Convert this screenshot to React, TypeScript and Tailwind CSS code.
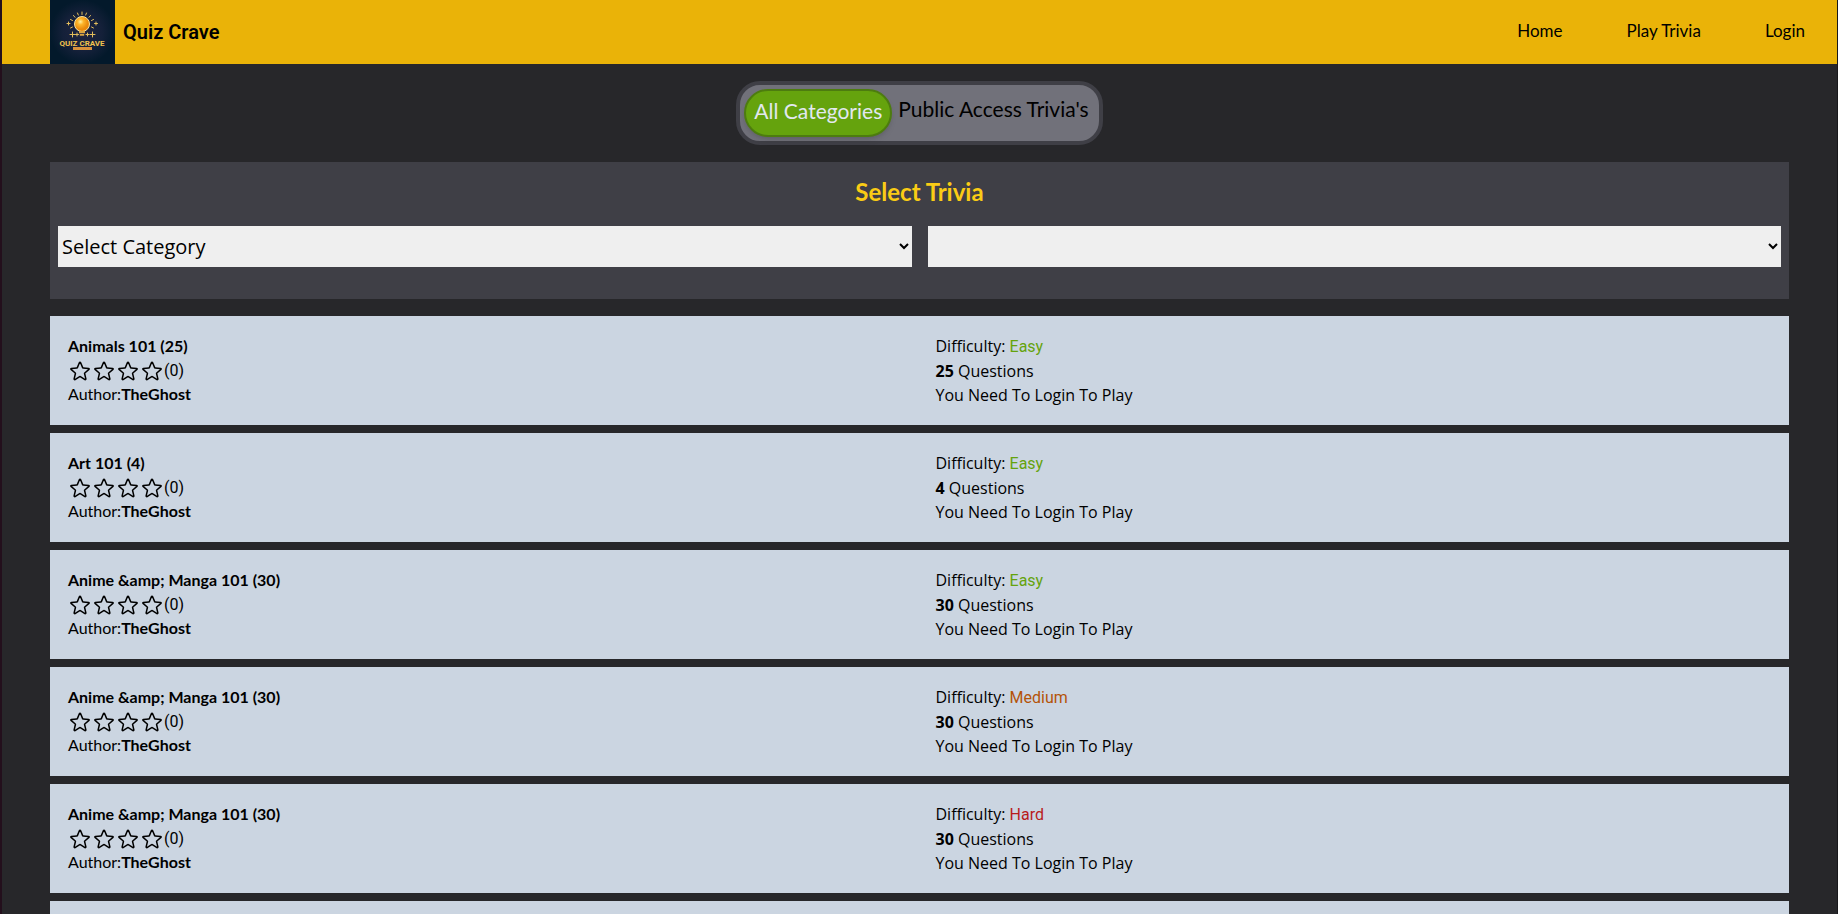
import { HiOutlineStar } from 'react-icons/hi2';

interface Trivia {
  title: string;
  count: number;
  difficulty: 'Easy' | 'Medium' | 'Hard';
  author: string;
}

const trivias: Trivia[] = [
  { title: 'Animals 101', count: 25, difficulty: 'Easy', author: 'TheGhost' },
  { title: 'Art 101', count: 4, difficulty: 'Easy', author: 'TheGhost' },
  { title: 'Anime &amp; Manga 101', count: 30, difficulty: 'Easy', author: 'TheGhost' },
  { title: 'Anime &amp; Manga 101', count: 30, difficulty: 'Medium', author: 'TheGhost' },
  { title: 'Anime &amp; Manga 101', count: 30, difficulty: 'Hard', author: 'TheGhost' },
];

const difficultyColor: Record<Trivia['difficulty'], string> = {
  Easy: 'text-[#65a30d]',
  Medium: 'text-[#b45309]',
  Hard: 'text-[#b91c1c]',
};

const navLinks = ['Home', 'Play Trivia', 'Login'];

function Logo() {
  return (
    <svg className="h-16 w-[65px]" viewBox="0 0 65 64" role="img" aria-label="Quiz Crave logo">
      <defs>
        <radialGradient id="logo-bg">
          <stop offset="0" stopColor="#1f2440" />
          <stop offset="0.6" stopColor="#142039" />
          <stop offset="1" stopColor="#03192b" />
        </radialGradient>
        <radialGradient id="logo-bulb" cx="0.4" cy="0.35">
          <stop offset="0" stopColor="#fff0a0" />
          <stop offset="0.4" stopColor="#fdb52a" />
          <stop offset="1" stopColor="#e98a0c" />
        </radialGradient>
      </defs>
      <rect width="65" height="64" fill="url(#logo-bg)" />
      <g stroke="#e3bd5c" strokeWidth="1" strokeLinecap="round">
        <path d="M32 12v2.500M27.500 13l.8 2M36.500 13l-.8 2M23.500 15.500l1.500 1.800M40.500 15.500l-1.500 1.800M20.500 19.500l2 1M43.500 19.500l-2 1M20.500 28l2-1M43.500 28l-2-1" />
        <path d="M18.500 22v3M17 23.500h3M46 22v3M44.500 23.500h3M22.500 32v5M20 34.500h5M42.500 32v5M40 34.500h5M27 33v3M25.500 34.500h3M37.500 33v3M36 34.500h3" />
      </g>
      <circle cx="32" cy="24" r="7.500" fill="url(#logo-bulb)" stroke="#f6e3a0" strokeWidth="1" />
      <path d="M29 31h6v2.200h-6zM29.800 34h4.400v1.800h-4.400z" fill="#d9a441" />
      <text x="32" y="46" textAnchor="middle" fontFamily="Roboto, sans-serif" fontWeight="bold" fontSize="8" fill="#f0c24e">
        QUIZ CRAVE
      </text>
      <rect x="23" y="47" width="19" height="3" fill="#d8913c" />
    </svg>
  );
}

function Header() {
  return (
    <header className="flex h-16 items-center justify-between bg-[#eab308] pl-12 pr-8">
      <a href="#home" className="flex items-center gap-2">
        <Logo />
        <span className="font-['Roboto',sans-serif] text-xl font-semibold">Quiz Crave</span>
      </a>
      <nav className="flex items-center gap-16 pb-0.5 font-['Lato',sans-serif] text-[17px]">
        {navLinks.map((label) => (
          <a key={label} href={`#${label}`}>
            {label}
          </a>
        ))}
      </nav>
    </header>
  );
}

function CategoryTabs() {
  return (
    <div className="mx-auto mt-[17px] flex h-16 w-fit rounded-3xl border-4 border-[#3f3f46] bg-[#71717a] p-1 font-['Lato',sans-serif] text-[21px]">
      <button
        type="button"
        className="rounded-3xl border-2 border-[#4d7c0f] bg-[#65a30d] px-2 pb-1 text-[#e2e8f0] shadow-md"
      >
        All Categories
      </button>
      <button type="button" className="px-1.5 pb-2">
        Public Access Trivia's
      </button>
    </div>
  );
}

function TriviaFilter() {
  const selectClass = "h-[41px] w-full bg-[#efefef] font-['Open_Sans',sans-serif] text-xl";

  return (
    <section className="mt-[17px] bg-[#3f3f46] px-2 pb-8 pt-4">
      <h1 className="pb-1 text-center font-['Lato',sans-serif] text-2xl leading-7 font-bold text-[#facc15]">
        Select Trivia
      </h1>
      <div className="mt-4 grid grid-cols-2 gap-4">
        <select aria-label="Category" className={selectClass}>
          <option>Select Category</option>
        </select>
        <select aria-label="Difficulty" className={selectClass}>
          <option></option>
        </select>
      </div>
    </section>
  );
}

function TriviaCard({ title, count, difficulty, author }: Trivia) {
  return (
    <li className="grid grid-cols-2 gap-8 bg-[#cbd5e1] p-[18px]">
      <div className="font-['Lato',sans-serif] leading-6">
        <h2 className="font-bold">
          {title} ({count})
        </h2>
        <div className="flex h-6 items-center pt-0.5 font-['Roboto',sans-serif]">
          {[1, 2, 3, 4].map((n) => (
            <HiOutlineStar key={n} className="h-6 w-6" />
          ))}
          <span>(0)</span>
        </div>
        <p>
          Author:<span className="font-bold">{author}</span>
        </p>
      </div>
      <div className="font-['Open_Sans',sans-serif] leading-6">
        <p className="leading-[25px]">
          Difficulty:{' '}
          <span className={`font-['Roboto',sans-serif] ${difficultyColor[difficulty]}`}>{difficulty}</span>
        </p>
        <p>
          <span className="font-bold">{count}</span> Questions
        </p>
        <p>You Need To Login To Play</p>
      </div>
    </li>
  );
}

export default function App() {
  return (
    <div className="h-screen overflow-hidden border-l-2 border-r border-l-[#230f1c] border-r-[#18181b] bg-[#27272a] text-black">
      <Header />
      <main className="px-12">
        <CategoryTabs />
        <TriviaFilter />
        <ul className="mt-[17px] flex flex-col gap-2">
          {trivias.map((trivia, i) => (
            <TriviaCard key={i} {...trivia} />
          ))}
          <li className="h-[109px] bg-[#cbd5e1]" />
        </ul>
      </main>
    </div>
  );
}
